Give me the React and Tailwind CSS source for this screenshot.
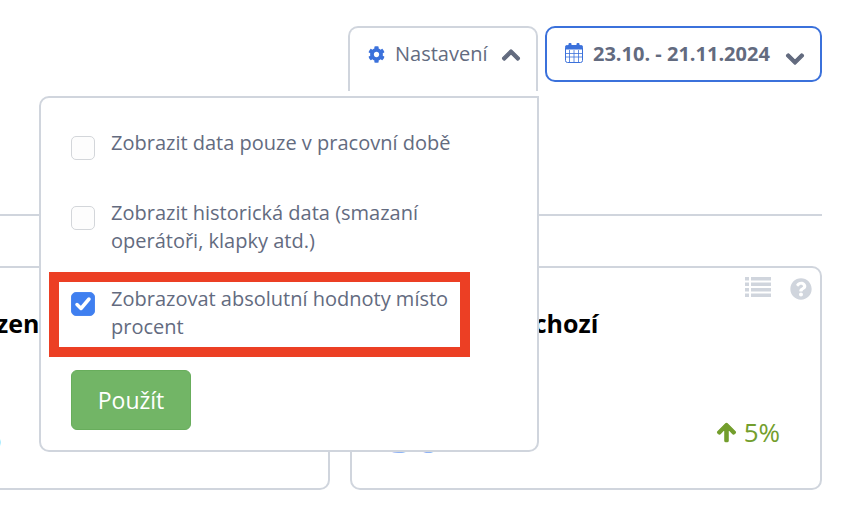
import { FaCog, FaChevronUp, FaChevronDown, FaQuestionCircle, FaArrowUp } from "react-icons/fa";

const CalendarIcon = () => (
  <svg width="18" height="20" viewBox="0 0 18 20" className="mt-[3px] shrink-0 text-[#3b71db]">
    <rect x="0.5" y="2.5" width="17" height="17" rx="2" fill="none" stroke="currentColor" />
    <rect x="0.5" y="2.5" width="17" height="4" fill="currentColor" />
    <rect x="3.5" y="0" width="3" height="5" rx="1" fill="currentColor" />
    <rect x="11.5" y="0" width="3" height="5" rx="1" fill="currentColor" />
    <path d="M4.5 7v12M9 7v12M13.5 7v12M1 10.5h16M1 14h16" stroke="currentColor" strokeWidth="0.8" fill="none" />
  </svg>
);

const ListIcon = () => (
  <svg width="26" height="21" viewBox="0 0 26 21" fill="currentColor">
    <path d="M0 0h4v3.5H0zM6 0h20v3.5H6zM0 5.5h4V9H0zM6 5.5h20V9H6zM0 11h4v3.5H0zM6 11h20v3.5H6zM0 16.500h4V20H0zM6 16.500h20V20H6z" />
  </svg>
);

const Option = ({ checked, className, children }) => (
  <label className={`flex items-start gap-[16px] ${className}`}>
    <span
      className={`mt-[7px] flex h-[24px] w-[24px] shrink-0 items-center justify-center rounded-[5px] border ${
        checked ? "border-[#4a86f0] bg-[#3f7ff0]" : "border-[#d3d6da] bg-[#fdfdfd]"
      }`}
    >
      {checked && (
        <svg width="18" height="16" viewBox="0 0 18 16">
          <path d="M3 8.500l4 4 8-9.500" fill="none" stroke="white" strokeWidth="3.500" strokeLinecap="round" strokeLinejoin="round" />
        </svg>
      )}
    </span>
    <span className="text-[20px] leading-[28px] text-[#636b7f]">{children}</span>
  </label>
);

export default function App() {
  return (
    <div className="relative h-[522px] w-[848px] overflow-hidden bg-white" style={{ fontFamily: "'Open Sans', sans-serif" }}>
      <div className="flex items-start justify-end gap-[7px] pr-[26px] pt-[26px]">
        <button className="flex h-[65px] w-[190px] items-start gap-[11px] rounded-t-[10px] border-2 border-b-0 border-[#d0d5dd] pl-[18px] pt-[12px] text-[20px] leading-[28px] text-[#636b7f]">
          <FaCog className="mt-[6px] text-[17px] text-[#3b71db]" />
          <span className="-ml-px">Nastavení</span>
          <FaChevronUp className="ml-[3px] mt-[5px] stroke-[30px] text-[20px]" />
        </button>
        <button className="flex h-[56px] w-[277px] items-start rounded-[10px] border-2 border-[#3b71db] pl-[18px] pt-[12px] text-[20px] font-bold leading-[28px] text-[#636b7f]">
          <CalendarIcon />
          <span className="ml-[10px]">23.10. - 21.11.2024</span>
          <FaChevronDown className="ml-[15px] mt-[9px] stroke-[30px] text-[20px]" />
        </button>
      </div>

      <div className="mr-[26px] mt-[123px] h-[2px] bg-[#d0d5dd]" />

      <div className="mt-[50px] flex justify-end gap-[20px] pr-[26px]">
        <div className="h-[224px] w-[472px] shrink-0 rounded-[10px] border-2 border-[#d0d5dd]">
          <p className="ml-[136px] mt-[39px] text-[25px] font-bold leading-[32px] text-black">zen</p>
          <p className="ml-[115px] mt-[72px] text-[48px] font-semibold leading-none text-[#3f7ff0]">3</p>
        </div>
        <div className="h-[224px] w-[472px] shrink-0 rounded-[10px] border-2 border-[#d0d5dd]">
          <div className="flex items-start justify-end gap-[19px] pr-[8px] pt-[9px] text-[#d0d5dd]">
            <ListIcon />
            <FaQuestionCircle className="mt-[1px] text-[22px]" />
          </div>
          <p className="ml-[147px] mt-[7px] text-[25px] font-bold leading-[32px] text-black">Příchozí</p>
          <div className="mt-[71px] flex items-start justify-between pl-[35px] pr-[40px]">
            <span className="text-[48px] font-semibold leading-[50px] text-[#8fb4f5]">30</span>
            <div className="mt-[6px] flex items-center gap-[7px] text-[26px] leading-[32px] text-[#739e2d]">
              <FaArrowUp className="stroke-[30px] text-[21px]" />
              <span>5%</span>
            </div>
          </div>
        </div>
      </div>

      <div className="absolute left-[39px] top-[96px] h-[356px] w-[500px] rounded-b-[10px] rounded-tl-[10px] border-2 border-[#d0d5dd] bg-white pl-[30px] pt-[31px]">
        <Option>Zobrazit data pouze v pracovní době</Option>
        <Option className="mt-[39px] w-[380px]">Zobrazit historická data (smazaní operátoři, klapky atd.)</Option>
        <Option checked className="mt-[30px] w-[380px]">Zobrazovat absolutní hodnoty místo procent</Option>
        <button className="mt-[29px] h-[60px] w-[120px] rounded-[6px] border border-[#68ad5c] bg-[#72b566] text-[23px] text-white">Použít</button>
      </div>

      <div className="absolute left-[49px] top-[272px] h-[85px] w-[421px] border-[10px] border-[#ec3f24]" />
    </div>
  );
}
